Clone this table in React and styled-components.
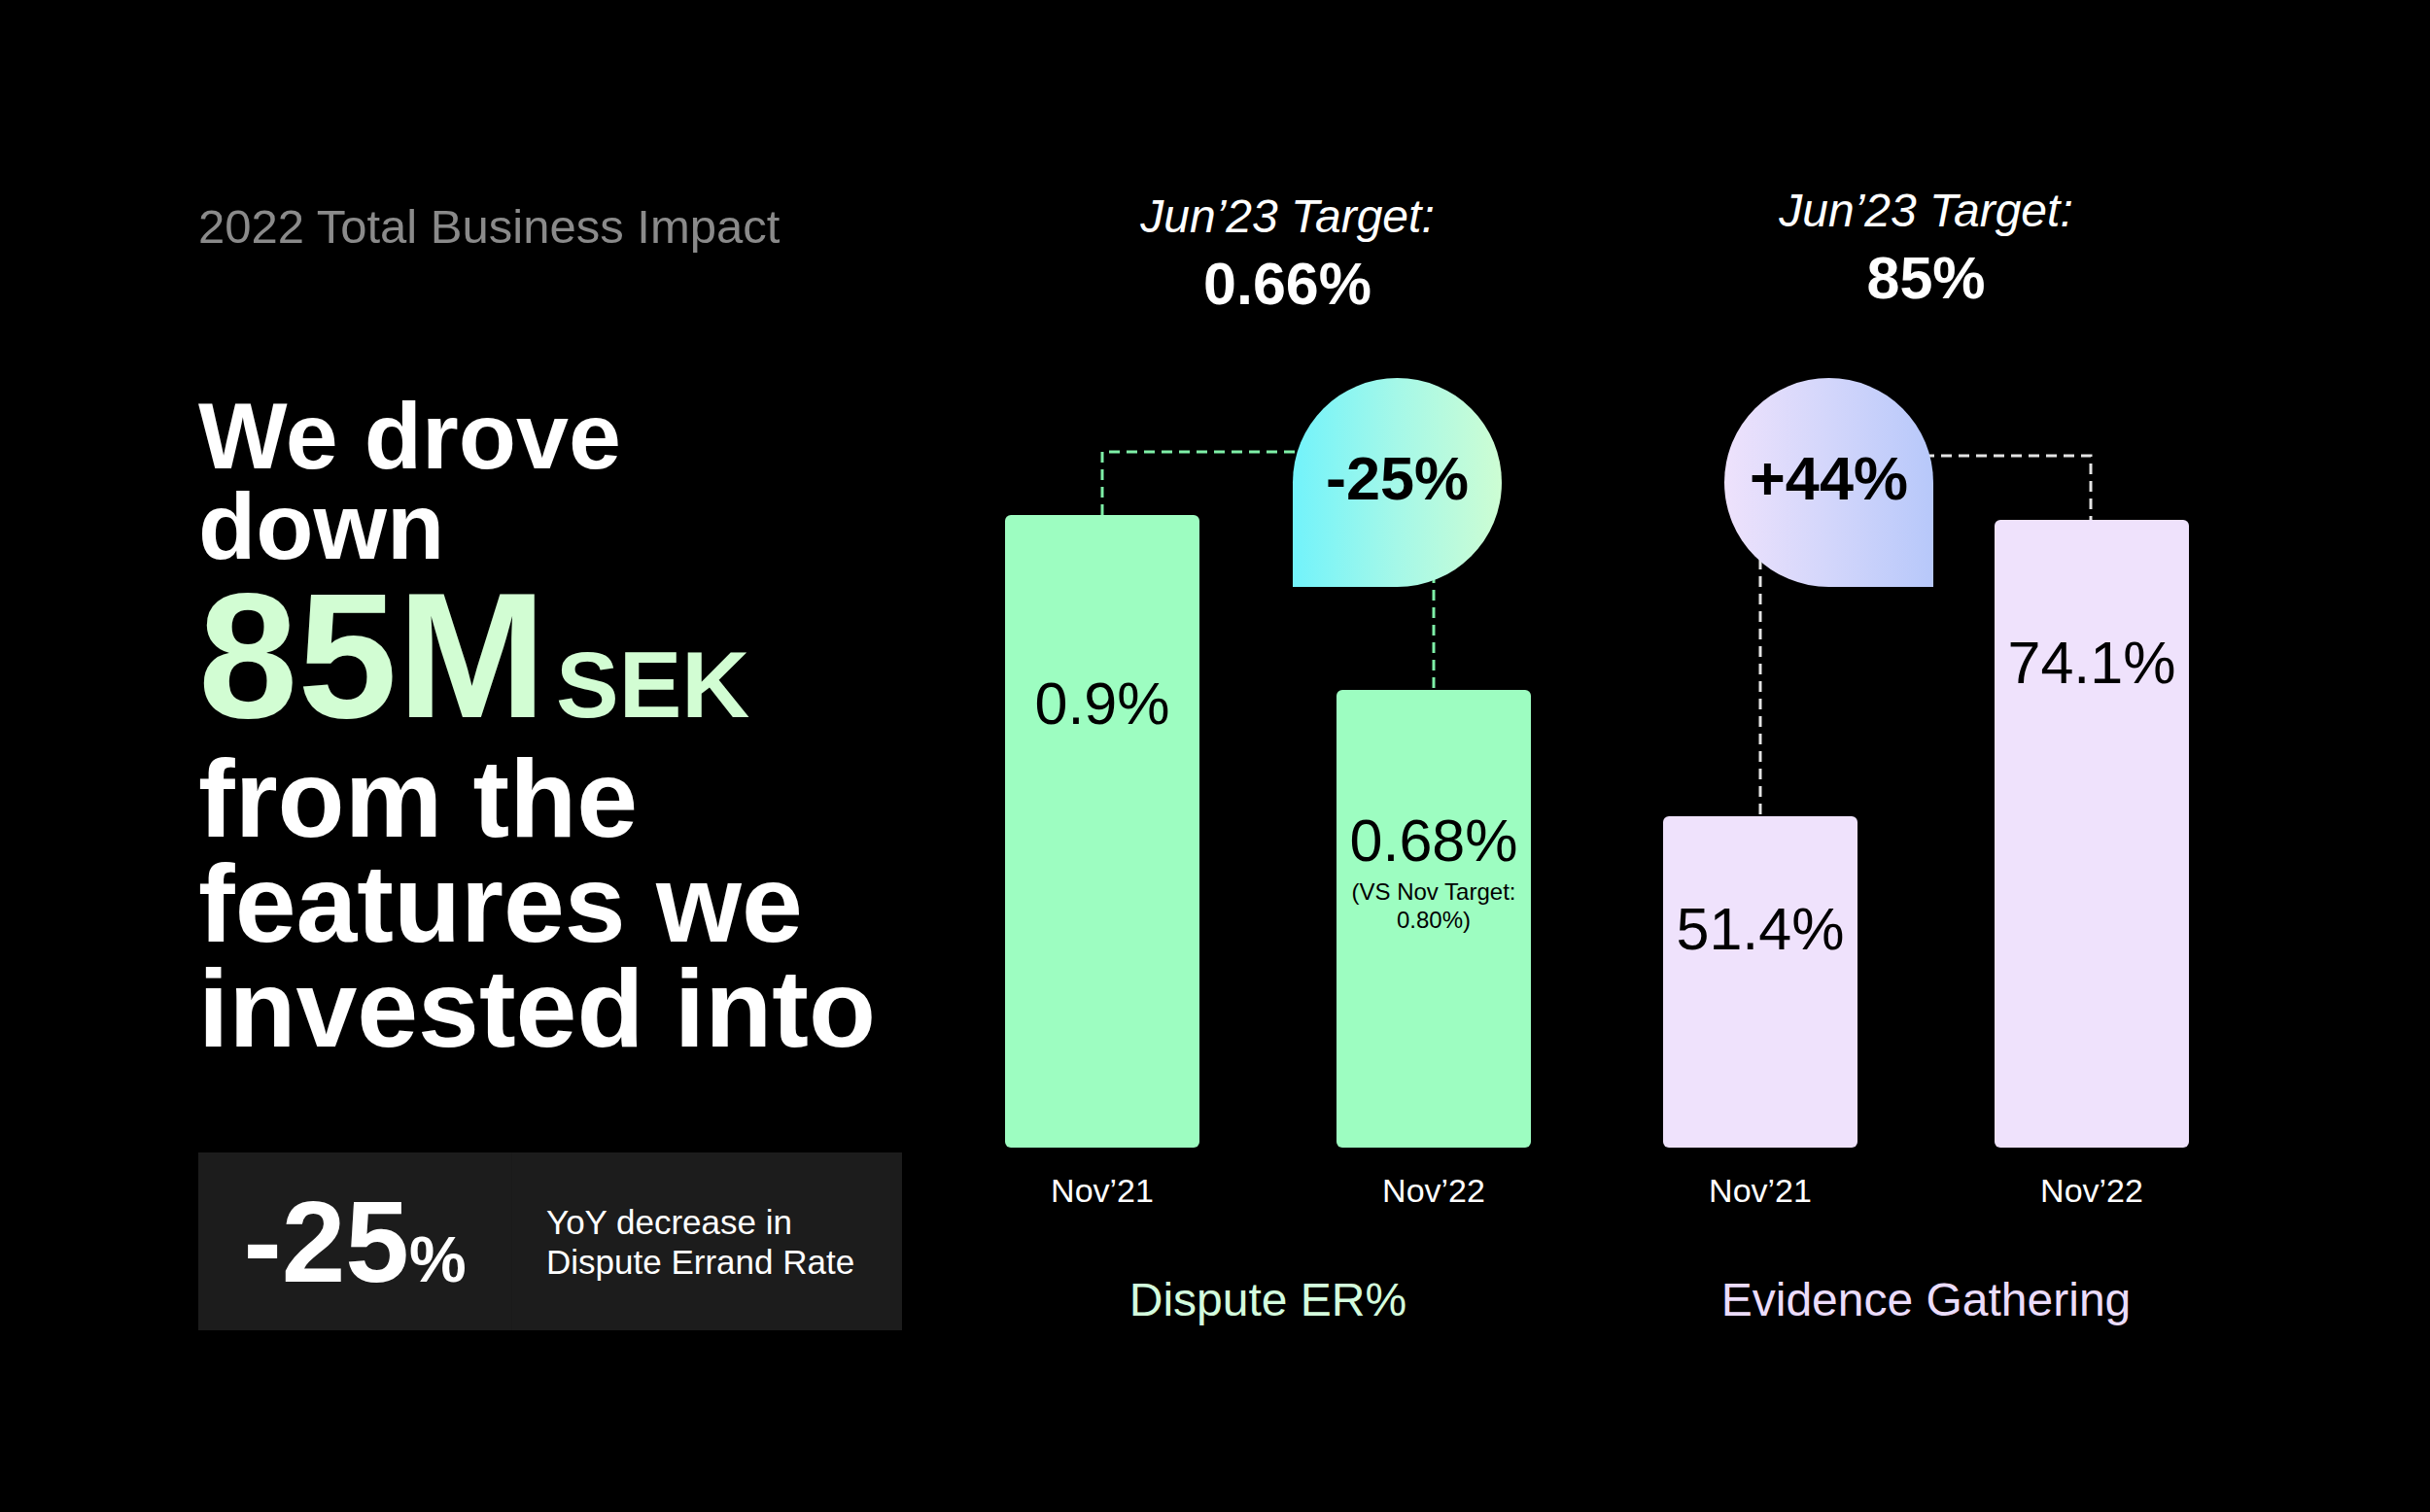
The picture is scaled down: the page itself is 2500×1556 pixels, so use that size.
import React from "react";
import styled, { createGlobalStyle } from "styled-components";

const GlobalStyle = createGlobalStyle`
  html, body {
    margin: 0;
    padding: 0;
    background: #000;
  }
  body {
    font-family: "Liberation Sans", Arial, sans-serif;
  }
`;

const palette = {
  eyebrow: "#8a8a8a",
  mint: "#d2fdd3",
  panel: "#1c1c1c",
};

const Slide = styled.main`
  width: 2500px;
  height: 1556px;
  box-sizing: border-box;
  padding-left: 204px;
  display: flex;
  align-items: flex-start;
  background: #000;
  overflow: hidden;
`;

const LeftColumn = styled.section`
  width: 830px;
  flex-shrink: 0;
  padding-top: 209px;
`;

const Eyebrow = styled.div`
  font-size: 49px;
  line-height: 48px;
  color: ${palette.eyebrow};
`;

const Headline = styled.h1`
  margin: 145px 0 0;
  font-weight: 700;
  color: #fff;
`;

const LeadLines = styled.span`
  display: block;
  font-size: 97px;
  line-height: 93px;
`;

const Figure = styled.span`
  display: block;
  font-size: 184px;
  line-height: 172px;
  color: ${palette.mint};
`;

const FigureUnit = styled.span`
  font-size: 97px;
  line-height: 1;
  margin-left: 10px;
`;

const TailLines = styled.span`
  display: block;
  margin-top: 8px;
  font-size: 113px;
  line-height: 108px;
`;

const StatPanel = styled.div`
  margin-top: 94px;
  width: 724px;
  height: 183px;
  display: flex;
  background: ${palette.panel};
`;

const StatValue = styled.div`
  width: 322px;
  display: flex;
  align-items: center;
  justify-content: center;
  color: #fff;
  font-weight: 700;
  font-size: 118px;
  line-height: 1;
  border-right: 1px solid #1a1a1a;
`;

const StatPercent = styled.span`
  font-size: 66px;
  margin-top: 36px;
`;

const StatText = styled.div`
  flex: 1;
  display: flex;
  align-items: center;
  padding-left: 35px;
  font-size: 35px;
  line-height: 41px;
  color: #fff;
`;

const Charts = styled.section`
  display: flex;
  gap: 136px;
  padding-top: 189px;
`;

const Chart = styled.div`
  width: 541px;
  display: flex;
  flex-direction: column;
`;

const TargetHeader = styled.div`
  height: 150px;
  box-sizing: border-box;
  padding-top: ${(p) => p.$dy}px;
  padding-left: ${(p) => p.$dx * 2}px;
  text-align: center;
  color: #fff;
`;

const TargetCaption = styled.div`
  font-size: 48px;
  line-height: 56px;
  font-style: italic;
`;

const TargetValue = styled.div`
  font-size: 61px;
  line-height: 82px;
  font-weight: 700;
`;

const Plot = styled.div`
  position: relative;
  height: 842px;
  display: flex;
  align-items: flex-end;
  gap: 141px;
`;

const Connectors = styled.svg`
  position: absolute;
  left: 0;
  top: 0;
  overflow: visible;
  pointer-events: none;
`;

const Bubble = styled.div`
  position: absolute;
  left: ${(p) => p.$left}px;
  top: ${(p) => p.$top}px;
  width: 215px;
  height: 215px;
  box-sizing: border-box;
  padding-bottom: 10px;
  display: flex;
  align-items: center;
  justify-content: center;
  border-radius: ${(p) => (p.$tail === "left" ? "50% 50% 50% 0" : "50% 50% 0 50%")};
  background: ${(p) => p.$gradient};
  color: #000;
  font-size: 63px;
  font-weight: 700;
  z-index: 2;
`;

const Bar = styled.div`
  width: 200px;
  flex-shrink: 0;
  box-sizing: border-box;
  padding-top: ${(p) => p.$pad}px;
  border-radius: 6px;
  background: ${(p) => p.$color};
  color: #000;
  text-align: center;
`;

const BarValue = styled.div`
  font-size: 61px;
  line-height: 61px;
`;

const BarNote = styled.div`
  margin-top: 7px;
  font-size: 24px;
  line-height: 29px;
`;

const Labels = styled.div`
  display: flex;
  gap: 141px;
  margin-top: 24px;
`;

const Label = styled.div`
  width: 200px;
  text-align: center;
  font-size: 34px;
  line-height: 40px;
  color: #fff;
`;

const ChartTitle = styled.div`
  margin-top: 65px;
  text-align: center;
  font-size: 48px;
  line-height: 56px;
  color: ${(p) => p.$color};
`;

const charts = [
  {
    title: "Dispute ER%",
    titleColor: "#d3fcdd",
    barColor: "#9dfdc1",
    dashColor: "#7ef0a7",
    target: "0.66%",
    shift: { x: 20, y: 6 },
    bubble: {
      text: "-25%",
      left: 296,
      top: 50,
      tail: "left",
      gradient: "linear-gradient(90deg, #72f3fb 0%, #a5f8e8 50%, #cdfdd3 100%)",
    },
    connectors: ["M100 191 V126 H330", "M441 250 V371"],
    bars: [
      { label: "Nov’21", value: "0.9%", height: 651, pad: 164 },
      {
        label: "Nov’22",
        value: "0.68%",
        note: ["(VS Nov Target:", "0.80%)"],
        height: 471,
        pad: 125,
      },
    ],
  },
  {
    title: "Evidence Gathering",
    titleColor: "#ebdcfb",
    barColor: "#efe2fc",
    dashColor: "#e4e4e4",
    target: "85%",
    shift: { x: 0, y: 0 },
    bubble: {
      text: "+44%",
      left: 63,
      top: 50,
      tail: "right",
      gradient: "linear-gradient(90deg, #eee2fc 0%, #d3d6fb 50%, #b7c8fa 100%)",
    },
    connectors: ["M250 130 H440 V196", "M100 200 V501"],
    bars: [
      { label: "Nov’21", value: "51.4%", height: 341, pad: 86 },
      { label: "Nov’22", value: "74.1%", height: 646, pad: 117 },
    ],
  },
];

const MetricChart = ({ chart }) => (
  <Chart>
    <TargetHeader $dx={chart.shift.x} $dy={chart.shift.y}>
      <TargetCaption>Jun’23 Target:</TargetCaption>
      <TargetValue>{chart.target}</TargetValue>
    </TargetHeader>

    <Plot>
      <Connectors width="541" height="842">
        {chart.connectors.map((d) => (
          <path
            key={d}
            d={d}
            fill="none"
            stroke={chart.dashColor}
            strokeWidth="3"
            strokeDasharray="11 7"
          />
        ))}
      </Connectors>
      <Bubble
        $left={chart.bubble.left}
        $top={chart.bubble.top}
        $tail={chart.bubble.tail}
        $gradient={chart.bubble.gradient}
      >
        {chart.bubble.text}
      </Bubble>
      {chart.bars.map((bar) => (
        <Bar
          key={bar.label}
          $color={chart.barColor}
          $pad={bar.pad}
          style={{ height: bar.height }}
        >
          <BarValue>{bar.value}</BarValue>
          {bar.note && (
            <BarNote>
              {bar.note.map((line) => (
                <div key={line}>{line}</div>
              ))}
            </BarNote>
          )}
        </Bar>
      ))}
    </Plot>

    <Labels>
      {chart.bars.map((bar) => (
        <Label key={bar.label}>{bar.label}</Label>
      ))}
    </Labels>
    <ChartTitle $color={chart.titleColor}>{chart.title}</ChartTitle>
  </Chart>
);

export default function App() {
  return (
    <>
      <GlobalStyle />
      <Slide>
        <LeftColumn>
          <Eyebrow>2022 Total Business Impact</Eyebrow>
          <Headline>
            <LeadLines>
              We drove
              <br />
              down
            </LeadLines>
            <Figure>
              85M<FigureUnit>SEK</FigureUnit>
            </Figure>
            <TailLines>
              from the
              <br />
              features we
              <br />
              invested into
            </TailLines>
          </Headline>
          <StatPanel>
            <StatValue>
              -25<StatPercent>%</StatPercent>
            </StatValue>
            <StatText>
              YoY decrease in
              <br />
              Dispute Errand Rate
            </StatText>
          </StatPanel>
        </LeftColumn>

        <Charts>
          {charts.map((chart) => (
            <MetricChart key={chart.title} chart={chart} />
          ))}
        </Charts>
      </Slide>
    </>
  );
}
